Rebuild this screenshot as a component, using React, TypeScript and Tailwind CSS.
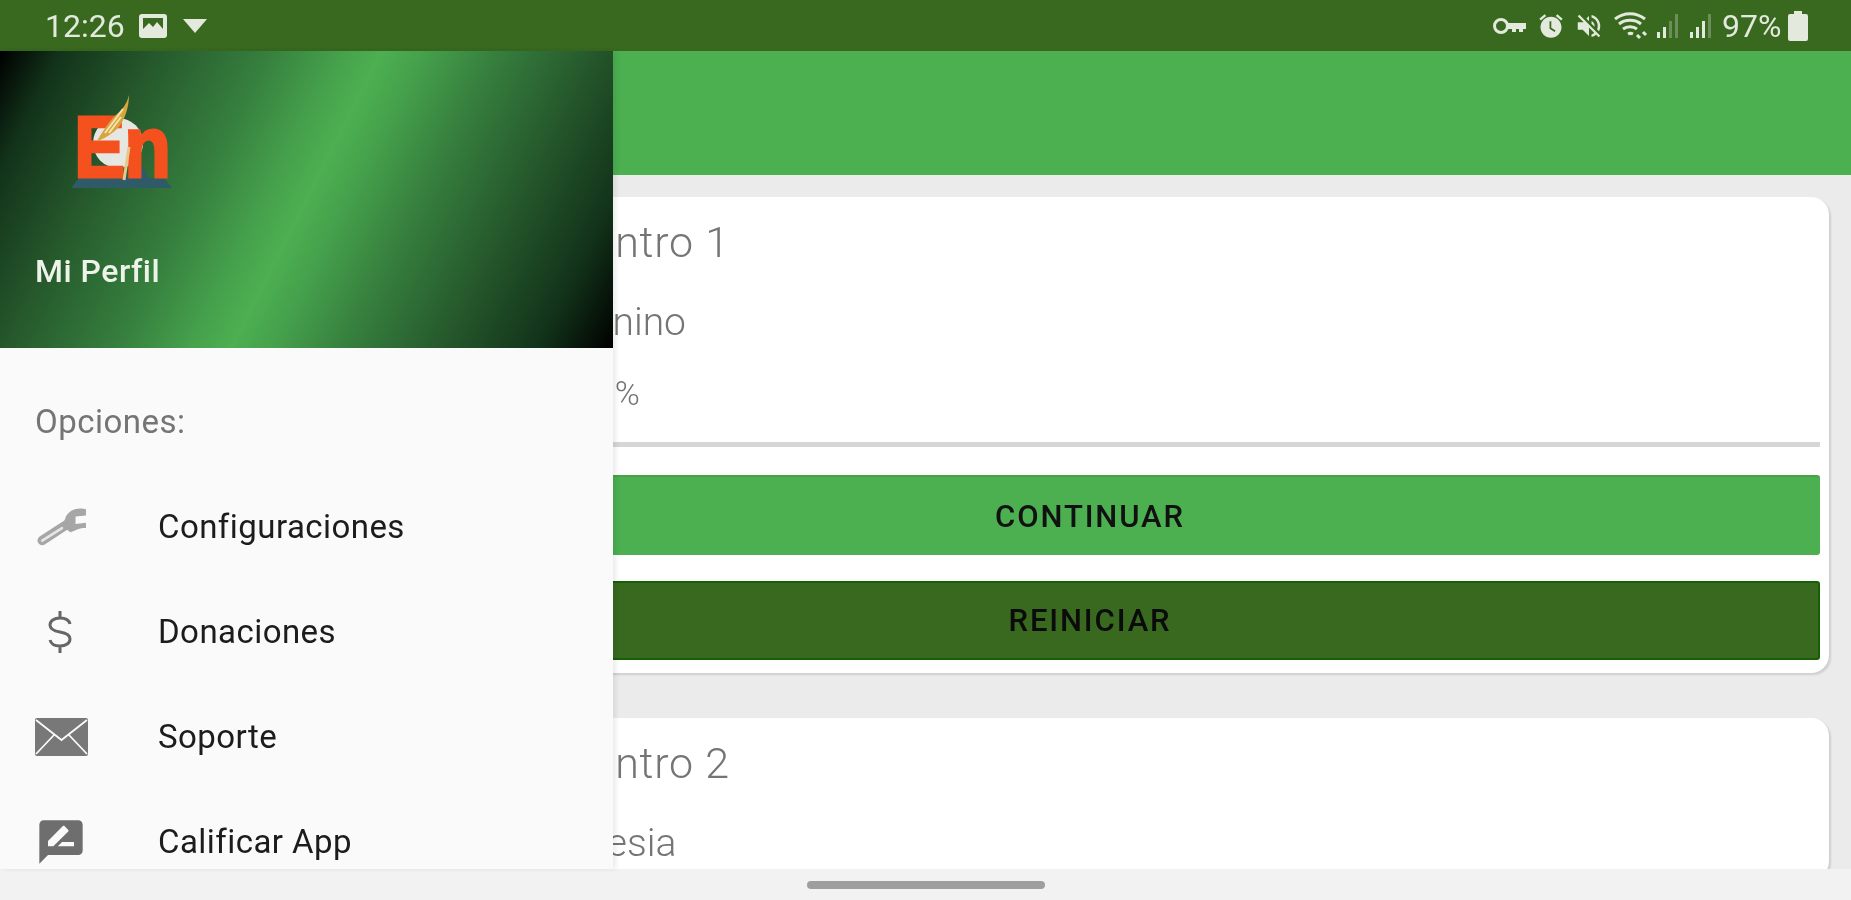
import React from "react";

const G = "#e3e9dc";

function Signal({ level }: { level: number }) {
  const hs = [6, 11, 17, 24];
  return (
    <svg width="26" height="26" viewBox="0 0 26 26">
      {hs.map((h, i) => (
        <rect key={i} x={2 + i * 6} y={25 - h} width="3" height={h} fill={G} opacity={i < level ? 1 : 0.3} />
      ))}
    </svg>
  );
}

function StatusBar() {
  return (
    <div className="h-[51px] shrink-0 bg-[#38691f] flex items-center justify-between pl-[45px] pr-[43px] text-[#e3e9dc]">
      <div className="flex items-center">
        <span className="text-[32px] leading-none w-[94px]">12:26</span>
        <svg width="28" height="24" viewBox="0 0 28 24">
          <rect x="0" y="0" width="28" height="24" rx="3" fill={G} />
          <rect x="4" y="4" width="20" height="11" fill="#38691f" />
          <path d="M4 15l6-6 4 4 4-5 6 7z" fill={G} />
        </svg>
        <svg className="ml-[16px]" width="24" height="14" viewBox="0 0 24 14">
          <path d="M0 0h24L12 14z" fill={G} />
        </svg>
      </div>
      <div className="flex items-center">
        <svg width="34" height="18" viewBox="0 0 34 18" fill="none">
          <circle cx="9" cy="9" r="6.5" stroke={G} strokeWidth="3" />
          <path d="M15 6h19v6h-3v3h-4v-3h-3v3h-4v-3h-5z" fill={G} />
        </svg>
        <svg className="ml-[11px]" width="28" height="30" viewBox="0 0 24 24" fill={G}>
          <path d="M22 5.720l-4.600-3.860-1.290 1.530 4.600 3.860L22 5.720zM7.880 3.390L6.600 1.860 2 5.710l1.290 1.530 4.590-3.850zM12 4c-4.970 0-9 4.030-9 9s4.030 9 9 9 9-4.030 9-9-4.030-9-9-9z" />
          <path d="M11.500 8v6l4 2.500" stroke="#38691f" strokeWidth="1.500" fill="none" />
        </svg>
        <svg className="ml-[9px]" width="30" height="30" viewBox="0 0 24 24" fill={G}>
          <path d="M16.500 12c0-1.770-1.020-3.290-2.500-4.030v2.210l2.450 2.450c.03-.2.05-.41.05-.63zm2.500 0c0 .94-.2 1.820-.54 2.640l1.510 1.510C20.630 14.910 21 13.500 21 12c0-4.280-2.990-7.860-7-8.770v2.060c2.890.86 5 3.540 5 6.710zM4.270 3L3 4.270 7.730 9H3v6h4l5 5v-6.730l4.250 4.250c-.67.52-1.420.93-2.250 1.180v2.060c1.380-.31 2.630-.95 3.690-1.810L19.730 21 21 19.730l-9-9L4.270 3zM12 4L9.910 6.090 12 8.180V4z" />
        </svg>
        <svg className="ml-[9px]" width="36" height="30" viewBox="0 0 36 30" fill="none" stroke={G} strokeWidth="3">
          <path d="M2 8c9-7 21-7 30 0M6 13c6-5 16-5 22 0M10 18c4-3 10-3 14 0M15 23c2-1 3-1 5 0" />
          <path d="M24 24l3 3M30 21l3 3" />
        </svg>
        <span className="w-[6px]" />
        <Signal level={2} />
        <span className="w-[7px]" />
        <Signal level={3} />
        <span className="text-[32px] leading-none ml-[8px] w-[66px]">97%</span>
        <svg width="20" height="30" viewBox="0 0 20 30">
          <path d="M6 0h8v3h4a2 2 0 0 1 2 2v23a2 2 0 0 1-2 2H2a2 2 0 0 1-2-2V5a2 2 0 0 1 2-2h4z" fill={G} />
        </svg>
      </div>
    </div>
  );
}

function Card({ title, sub, subMl, pct, buttons }: { title: string; sub: string; subMl: string; pct?: string; buttons?: boolean }) {
  return (
    <div className="shrink-0 ml-[351px] mr-[22px] rounded-[18px] bg-white shadow-[2px_2px_2px_#cfcfcf] pl-[9px] pr-[9px] pb-[13px]">
      <div className="pl-[135px] text-[#757575]">
        <div className="text-[43px] leading-[48px] pt-[21px] font-light tracking-[0.8px]">{title}</div>
        <div className={"text-[39px] leading-[46px] mt-[33px] font-light " + subMl}>{sub}</div>
        {pct && <div className="text-[34px] leading-[36px] mt-[30px] -ml-[16px] font-light">{pct}</div>}
      </div>
      {buttons && (
        <>
          <div className="h-[5px] bg-[#d6d6d6] mt-[31px]" />
          <button className="block w-full h-[80px] mt-[28px] pt-[2px] rounded-[3px] bg-[#4caf50] border-t-2 border-[#46a34a] text-[31px] tracking-[1.9px] font-medium text-[#111]">
            CONTINUAR
          </button>
          <button className="block w-full h-[79px] mt-[26px] pt-[2px] rounded-[3px] bg-[#38691f] border-2 border-[#155f05] text-[31px] tracking-[1.9px] font-medium text-[#0b0b0b]">
            REINICIAR
          </button>
        </>
      )}
    </div>
  );
}

function MenuRow({ icon, label }: { icon: React.ReactNode; label: string }) {
  return (
    <div className="h-[105px] flex items-center">
      <div className="w-[158px] pl-[35px] shrink-0">{icon}</div>
      <span className="text-[33px] tracking-[0.45px] text-[#1c1c1c]">{label}</span>
    </div>
  );
}

function Logo() {
  return (
    <div className="relative w-[101px] h-[93px]">
      <svg className="absolute inset-0" width="101" height="93" viewBox="0 0 101 93">
        <circle cx="47" cy="48" r="25" fill="#e6e6e2" />
        <path d="M0 93l8-10h85l8 10z" fill="#2f5a68" />
        <path d="M54 84l6-12h12l6 12z" fill="#2f5a68" />
      </svg>
      <span className="absolute left-[3px] top-[8px] origin-left scale-x-[0.88] text-[87px] leading-[87px] font-bold text-[#f4511e] tracking-[-1px] [-webkit-text-stroke:3px_#f4511e] [font-family:'Liberation_Sans',sans-serif]">
        En
      </span>
      <svg className="absolute inset-0" width="101" height="93" viewBox="0 0 101 93" fill="none">
        <path d="M58 0C56 8 52 14 46 19C38 26 32 36 26 46C34 44 42 38 48 32C54 24 58 12 58 0Z" fill="#d8a53c" />
        <path d="M52 14L34 38M50 22L38 38" stroke="#f5e2b0" strokeWidth="2" />
        <path d="M58 52L53 85" stroke="#e8c88a" strokeWidth="3" />
      </svg>
    </div>
  );
}

function Drawer() {
  return (
    <div className="absolute left-0 top-[51px] bottom-[31px] w-[613px] bg-[#fafafa] overflow-hidden shadow-[3px_0_5px_rgba(0,0,0,0.08)] flex flex-col">
      <div className="h-[297px] shrink-0 pt-[44px] pl-[71px] bg-[linear-gradient(117deg,#000_0%,#12331a_8%,#25572b_20%,#367f3e_35%,#46a24c_45%,#4caf50_50%,#46a24c_55%,#367f3e_65%,#25572b_78%,#12331a_90%,#000_100%)]">
        <Logo />
        <div className="-ml-[36px] mt-[65px] text-[32px] leading-[36px] tracking-[0.5px] font-medium text-[#eef3ea]">Mi Perfil</div>
      </div>
      <div className="pl-[35px] pt-[56px] text-[33px] tracking-[0.5px] leading-[36px] text-[#757575]">Opciones:</div>
      <div className="mt-[34px]">
        <MenuRow
          label="Configuraciones"
          icon={
            <svg className="ml-[2px]" width="50" height="38" viewBox="0 0 48 36" fill="none">
              <path d="M5 31L28 16" stroke="#a6a6a6" strokeWidth="9" strokeLinecap="round" />
              <path d="M5 31L24 19" stroke="#e6e6e6" strokeWidth="2.500" strokeLinecap="round" />
              <path d="M47 1C40 -1 30 1 27 10L24 17L32 23C38 21 40 19 47 19L47 14L37 15L37 8L47 7Z" fill="#a6a6a6" />
            </svg>
          }
        />
        <MenuRow
          label="Donaciones"
          icon={
            <svg className="ml-[13px]" width="24" height="42" viewBox="0 0 24 42" fill="none" stroke="#666666" strokeWidth="3">
              <path d="M12 0v6M12 36v6M22 13c-1-4-5-6-10-6-6 0-10 3-10 7s4 6 10 7 10 3 10 7-4 7-10 7c-5 0-9-2-10-6" />
            </svg>
          }
        />
        <MenuRow
          label="Soporte"
          icon={
            <svg width="53" height="38" viewBox="0 0 53 38">
              <rect width="53" height="38" rx="2" fill="#787878" />
              <path d="M1 2l25.500 20L52 2M1 36l18-19M52 36L34 17" stroke="#fafafa" strokeWidth="1.800" fill="none" />
            </svg>
          }
        />
        <MenuRow
          label="Calificar App"
          icon={
            <svg width="52" height="52" viewBox="0 0 24 24" fill="#6e6e6e">
              <path d="M20 2H4c-1.100 0-1.990.9-1.990 2L2 22l4-4h14c1.100 0 2-.9 2-2V4c0-1.100-.9-2-2-2zM6 14v-2.470l6.880-6.880c.2-.2.510-.2.710 0l1.770 1.770c.2.2.2.510 0 .710L8.470 14H6zm12 0h-7.500l2-2H18v2z" />
            </svg>
          }
        />
      </div>
    </div>
  );
}

export default function App() {
  return (
    <div className="relative w-[1851px] h-[900px] overflow-hidden flex flex-col bg-[#ebebeb] blur-[0.6px] [font-family:Roboto,sans-serif]">
      <StatusBar />
      <div className="h-[124px] shrink-0 bg-[#4caf50]" />
      <div className="flex-1 min-h-0 overflow-hidden flex flex-col gap-[45px] pt-[22px]">
        <Card title="Encuentro 1" sub="Femenino" subMl="ml-[21px]" pct="Avance 0%" buttons />
        <Card title="Encuentro 2" sub="La Iglesia" subMl="ml-[20px]" />
      </div>
      <div className="h-[31px] shrink-0 bg-[#f2f2f2] flex items-center justify-center">
        <div className="w-[238px] h-[8px] rounded-full bg-[#9e9e9e]" />
      </div>
      <Drawer />
    </div>
  );
}
